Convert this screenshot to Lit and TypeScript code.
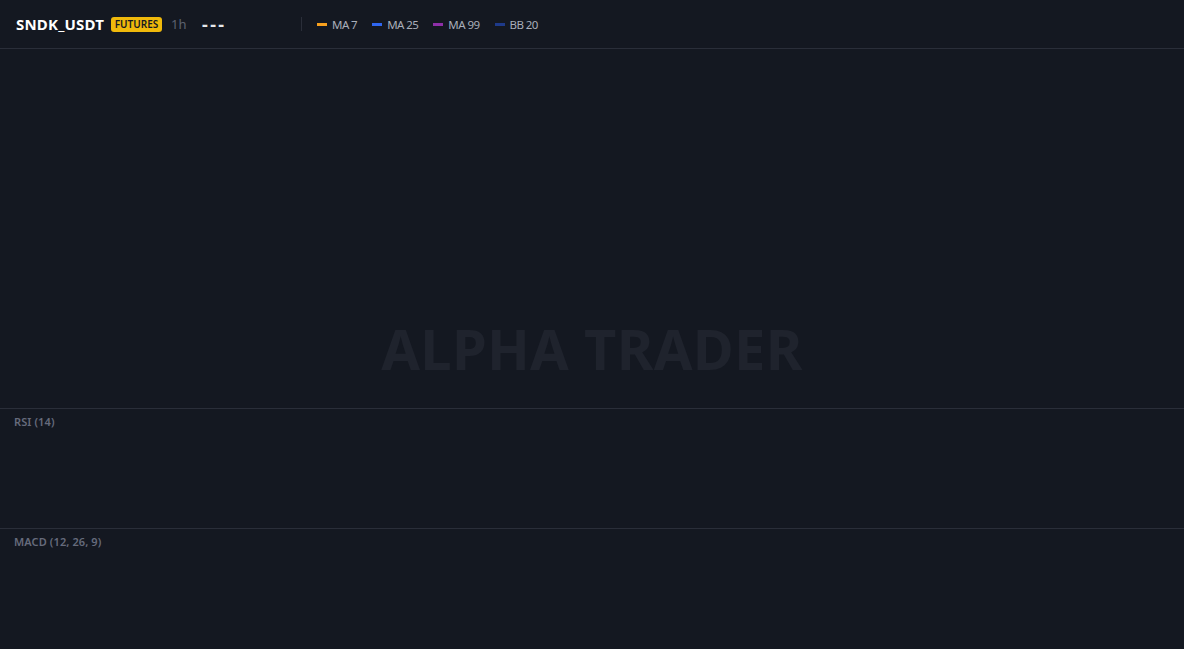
import { LitElement, html, css } from "lit";
import { customElement } from "lit/decorators.js";

const LEGEND = [
  { label: "MA 7", color: "#f7a01e" },
  { label: "MA 25", color: "#2f66f0" },
  { label: "MA 99", color: "#8e2fa8" },
  { label: "BB 20", color: "#1e3a8a" },
];

@customElement("app-root")
export class AppRoot extends LitElement {
  static styles = css`
    :host {
      display: flex;
      flex-direction: column;
      height: 649px;
      width: 1184px;
      overflow: hidden;
      background: #141821;
      font-family: "Noto Sans", sans-serif;
      color: #d1d4dc;
    }
    .header {
      flex: none;
      box-sizing: border-box;
      height: 49px;
      display: flex;
      align-items: center;
      padding: 0 16px;
      border-bottom: 1px solid #2a2e39;
    }
    .symbol {
      width: 88px;
      font-size: 15px;
      font-weight: 700;
      letter-spacing: 0.2px;
      color: #fff;
      white-space: nowrap;
    }
    .badge {
      box-sizing: border-box;
      width: 51px;
      height: 15px;
      margin-left: 7px;
      background: #f0b90b;
      color: #141821;
      font-size: 10px;
      font-weight: 600;
      line-height: 15px;
      text-align: center;
      border-radius: 3px;
    }
    .tf { width: 15px; margin-left: 9px; font-size: 13px; color: #5d6270; }
    .price {
      width: 99px;
      margin-left: 16px;
      font-size: 18px;
      font-weight: 700;
      line-height: 20px;
      color: #e5e7eb;
      letter-spacing: 2.4px;
    }
    .legend {
      display: flex;
      align-items: center;
      gap: 15px;
      height: 14px;
      padding-left: 15px;
      border-left: 1px solid #2a2e39;
    }
    .item {
      display: flex;
      align-items: center;
      gap: 5px;
      height: 14px;
      line-height: 13px;
      font-size: 11.5px;
      letter-spacing: -0.55px;
      color: #a9aeb9;
    }
    .swatch { width: 10px; height: 3px; }
    .chart { flex: none; height: 359px; position: relative; }
    .watermark {
      position: absolute;
      left: 0;
      right: 0;
      top: 261px;
      text-align: center;
      font-size: 56px;
      line-height: 76px;
      font-weight: 700;
      letter-spacing: 0.3px;
      color: #1f232d;
    }
    .pane {
      flex: none;
      box-sizing: border-box;
      height: 120px;
      border-top: 1px solid #2a2e39;
      padding: 5px 14px;
      font-size: 11px;
      line-height: 15px;
      font-weight: 600;
      letter-spacing: 0.1px;
      color: #666b7c;
    }
    .pane:last-child { flex: 1; }
  `;

  render() {
    return html`
      <div class="header">
        <span class="symbol">SNDK_USDT</span>
        <span class="badge">FUTURES</span>
        <span class="tf">1h</span>
        <span class="price">---</span>
        <div class="legend">
          ${LEGEND.map(
            (l) => html`<span class="item"
              ><span class="swatch" style="background:${l.color}"></span>${l.label}</span
            >`
          )}
        </div>
      </div>
      <div class="chart"><div class="watermark">ALPHA TRADER</div></div>
      <div class="pane">RSI (14)</div>
      <div class="pane">MACD (12, 26, 9)</div>
    `;
  }
}
